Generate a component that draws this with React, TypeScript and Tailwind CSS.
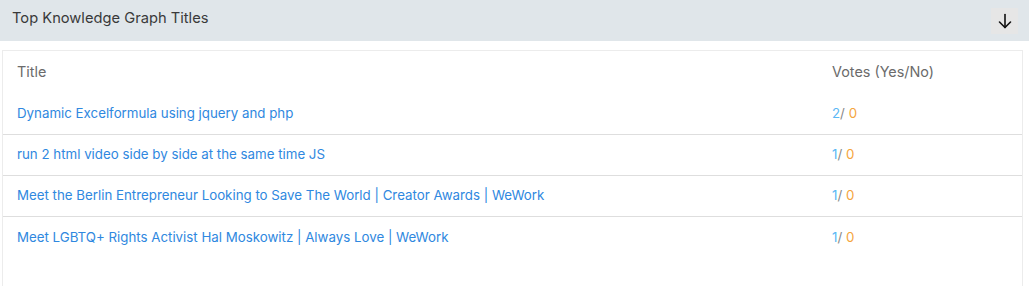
import React from 'react';

const rows = [
  { title: 'Dynamic Excelformula using jquery and php', yes: 2, no: 0 },
  { title: 'run 2 html video side by side at the same time JS', yes: 1, no: 0 },
  { title: 'Meet the Berlin Entrepreneur Looking to Save The World | Creator Awards | WeWork', yes: 1, no: 0 },
  { title: 'Meet LGBTQ+ Rights Activist Hal Moskowitz | Always Love | WeWork', yes: 1, no: 0 },
];

export default function App() {
  return (
    <div className="w-[1029px] h-[286px] bg-white overflow-hidden" style={{ fontFamily: 'Inter, "Noto Sans", sans-serif' }}>
      {/* Panel header */}
      <div className="h-[41px] bg-[#e0e6ea] flex items-center justify-between pl-3 pr-[11px]">
        <span className="text-[14.7px] text-[#3a3a3a] pb-[4px]">Top Knowledge Graph Titles</span>
        <button className="w-[27px] h-[26px] bg-[#e6e6e6] flex items-center justify-center">
          <svg width="14" height="16" viewBox="0 0 14 16" fill="none" stroke="#111" strokeWidth="1.6" strokeLinecap="round" strokeLinejoin="round">
            <path d="M7 1.5v13" />
            <path d="M1.5 9l5.5 5.5 5.5-5.5" />
          </svg>
        </button>
      </div>

      {/* Table card */}
      <div className="mt-[9px] ml-[2px] w-[1021px] h-[260px] border border-[#ececec] px-[14px]">
        <div className="flex h-[43px] items-end pb-[11px] text-[14.4px] text-[#6b6b6b]">
          <div className="flex-1">Title</div>
          <div className="w-[176px]">Votes (Yes/No)</div>
        </div>
        {rows.map((r, i) => (
          <div
            key={i}
            className={`flex h-[41px] items-center text-[13.3px] ${i < rows.length - 1 ? 'border-b border-[#dedede]' : ''} -mx-[14px] px-[14px]`}
          >
            <div className="flex-1 text-[#2f88e0]">{r.title}</div>
            <div className="w-[176px]">
              <span className="text-[#5ab8f5]">{r.yes}</span>
              <span className="text-[#888]">/ </span>
              <span className="text-[#f5a53c]">{r.no}</span>
            </div>
          </div>
        ))}
      </div>
    </div>
  );
}
